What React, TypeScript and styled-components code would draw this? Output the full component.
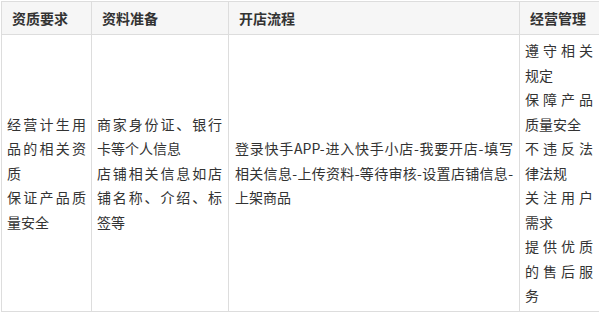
import styled, { createGlobalStyle } from 'styled-components';

const GlobalStyle = createGlobalStyle`
  html, body {
    margin: 0;
    padding: 0;
    background: #fff;
  }
  body {
    font-family: "Noto Sans CJK SC", "Liberation Sans", sans-serif;
    color: #333;
  }
`;

const Table = styled.table`
  width: 600px;
  margin: 1px 0 0 1px;
  border-collapse: collapse;
  table-layout: fixed;
  font-size: 14px;
`;

const HeadCell = styled.th<{ $width: number }>`
  width: ${(p) => p.$width}px;
  height: 33px;
  padding: 0 10px;
  box-sizing: border-box;
  background: #f6f6f6;
  border: 1px solid #dddddd;
  font-weight: bold;
  font-size: 14px;
  text-align: left;
  vertical-align: middle;
  color: #333;
`;

const Cell = styled.td<{ $padLeft?: number; $padRight?: number }>`
  padding: 3px ${(p) => p.$padRight ?? 5}px 3px ${(p) => p.$padLeft ?? 5}px;
  border: 1px solid #dddddd;
  vertical-align: middle;
  line-height: 24.5px;
  text-align: justify;
  color: #333;
`;

const Para = styled.p`
  margin: 0;
`;

// a single line of the flow text; $fill stretches it across the cell
const Line = styled.div<{ $fill?: boolean }>`
  white-space: nowrap;
  text-align: justify;
  text-align-last: ${(p) => (p.$fill ? 'justify' : 'left')};
`;

const columns = [
  { title: '资质要求', width: 90 },
  { title: '资料准备', width: 137 },
  { title: '开店流程', width: 291 },
  { title: '经营管理', width: 82 },
];

const flowLines = [
  '登录快手APP-进入快手小店-我要开店-填写',
  '相关信息-上传资料-等待审核-设置店铺信息-',
  '上架商品',
];

export default function App() {
  return (
    <>
      <GlobalStyle />
      <Table>
        <thead>
          <tr>
            {columns.map((c) => (
              <HeadCell key={c.title} $width={c.width}>
                {c.title}
              </HeadCell>
            ))}
          </tr>
        </thead>
        <tbody>
          <tr>
            <Cell>
              <Para>经营计生用品的相关资质</Para>
              <Para>保证产品质量安全</Para>
            </Cell>
            <Cell $padRight={6}>
              <Para>商家身份证、银行卡等个人信息</Para>
              <Para>店铺相关信息如店铺名称、介绍、标签等</Para>
            </Cell>
            <Cell $padLeft={6} $padRight={6}>
              {flowLines.map((l, i) => (
                <Line key={l} $fill={i < flowLines.length - 1}>
                  {l}
                </Line>
              ))}
            </Cell>
            <Cell $padRight={8}>
              <Para>遵守相关规定</Para>
              <Para>保障产品质量安全</Para>
              <Para>不违反法律法规</Para>
              <Para>关注用户需求</Para>
              <Para>提供优质的售后服务</Para>
            </Cell>
          </tr>
        </tbody>
      </Table>
    </>
  );
}
